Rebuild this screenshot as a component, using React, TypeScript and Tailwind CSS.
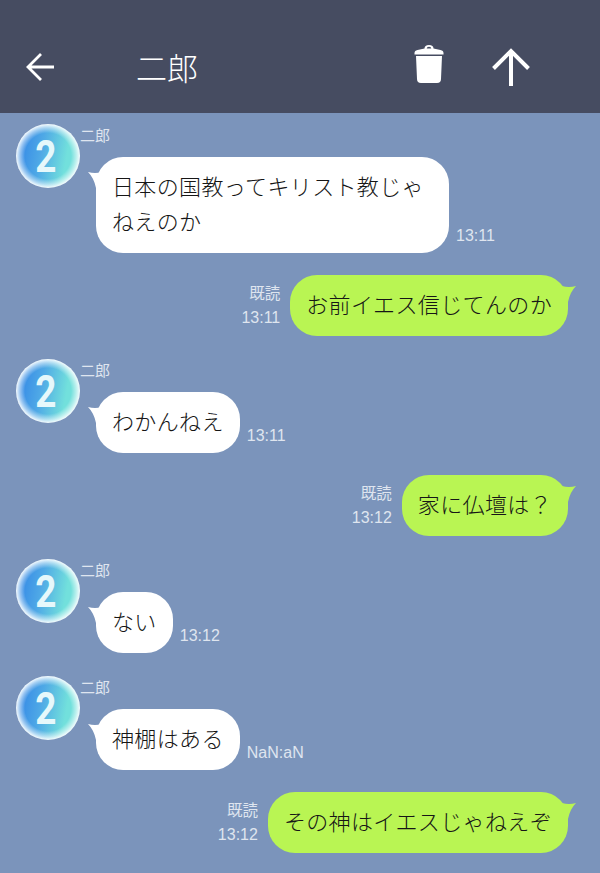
const cjk = { fontFamily: '"Noto Sans CJK JP", sans-serif' };
const latin = { fontFamily: '"Liberation Sans", sans-serif' };

const Avatar = () => (
  <div className="flex h-16 w-16 shrink-0 items-center justify-center rounded-full bg-[radial-gradient(circle_closest-side_at_50%_50%,transparent_72%,rgba(255,255,255,0.5)_88%,#f6fcfe_100%),linear-gradient(100deg,#3a8fe6_15%,#4fa9e6_40%,#72e0dc_75%)]">
    <span className="-ml-1 scale-x-[0.82] text-[45px] font-bold leading-none text-[#e6f8fb]" style={{ fontFamily: '"Roboto", sans-serif' }}>
      2
    </span>
  </div>
);

const Left = ({ text, time }: { text: string; time: string }) => (
  <div className="mt-px flex items-start pl-4">
    <Avatar />
    <div className="flex flex-col">
      <div className="h-[33px] pt-px text-[15px] leading-5 text-[#dfe5ef]" style={cjk}>
        二郎
      </div>
      <div className="flex items-end">
        <div className="relative ml-4 max-w-[353px] rounded-[27px] bg-white px-4 pb-[15px] pt-[11px] text-[22px] font-light leading-[35px] tracking-[0.36px] text-[#161616]" style={cjk}>
          <svg className="absolute -left-2 top-[15px]" width="14" height="16" viewBox="0 0 14 16">
            <path d="M0 0 Q7 2 14 0 L14 14 L8 16 Q6 6 0 0Z" fill="#fff" />
          </svg>
          {text}
        </div>
        <span className="mb-2 ml-[7px] text-[16px] leading-[18px] text-[#dfe5ef]" style={latin}>
          {time}
        </span>
      </div>
    </div>
  </div>
);

const Right = ({ text, time }: { text: string; time: string }) => (
  <div className="flex items-end justify-end pr-8">
    <div className="mb-[6px] mr-[10px] flex flex-col items-end leading-[25px] text-[#dfe5ef]">
      <span className="text-[15.5px]" style={cjk}>既読</span>
      <span className="text-[16px]" style={latin}>{time}</span>
    </div>
    <div className="relative rounded-[27px] bg-[#b9f553] px-4 pb-[15px] pt-[11px] text-[22px] font-light leading-[35px] tracking-[0.36px] text-[#161616]" style={cjk}>
      <svg className="absolute -right-2 top-[11px]" width="14" height="16" viewBox="0 0 14 16">
        <path d="M14 0 Q7 2 0 0 L0 14 L6 16 Q8 6 14 0Z" fill="#b9f553" />
      </svg>
      {text}
    </div>
  </div>
);

export default function App() {
  return (
    <div className="flex h-[873px] w-[600px] flex-col overflow-hidden bg-[#7b94bb]">
      <header className="flex h-[113px] shrink-0 items-center bg-[#464c61] pl-[26px] pt-5 text-white">
        <svg width="30" height="30" viewBox="0 0 30 30" fill="none" stroke="#fff" strokeWidth="2.8">
          <path d="M28 15H2M15 2 2 15 15 28" />
        </svg>
        <div className="ml-[80px] text-[31px] font-light leading-none" style={cjk}>
          二郎
        </div>
        <svg width="30" height="38" viewBox="0 0 30 38" fill="#fff" className="ml-[216px] -mt-[5px]">
          <path d="M10.500 3.500a4.500 3.500 0 0 1 9 0l7 1.500q3 .5 3 3v1.500H.5V8q0-2.500 3-3zM12.700 3.500h4.600a2.300 1.800 0 0 0-4.600 0z" fillRule="evenodd" />
          <path d="M2 11h26l-1 23q0 4-4 4H7q-4 0-4-4z" />
        </svg>
        <svg width="40" height="38" viewBox="0 0 40 38" fill="none" stroke="#fff" strokeWidth="4" className="ml-[47px] mt-px">
          <path d="M20 38V3M2.500 20.500 20 3l17.500 17.500" />
        </svg>
      </header>
      <main className="flex flex-col gap-[22px] pt-[10px]">
        <Left text="日本の国教ってキリスト教じゃねえのか" time="13:11" />
        <Right text="お前イエス信じてんのか" time="13:11" />
        <Left text="わかんねえ" time="13:11" />
        <Right text="家に仏壇は？" time="13:12" />
        <Left text="ない" time="13:12" />
        <Left text="神棚はある" time="NaN:aN" />
        <Right text="その神はイエスじゃねえぞ" time="13:12" />
      </main>
    </div>
  );
}
